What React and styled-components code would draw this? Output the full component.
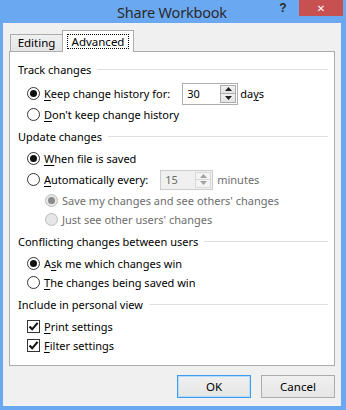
import styled, { createGlobalStyle } from "styled-components";

const GlobalStyle = createGlobalStyle`
  html, body {
    margin: 0;
    padding: 0;
  }
  body {
    font-family: "Noto Sans", "Open Sans", sans-serif;
    font-size: 11px;
    color: #000;
  }
  * {
    box-sizing: border-box;
  }
`;

const Check = () => (
  <svg width="11" height="11" viewBox="0 0 11 11">
    <path d="M1.5 5.5 L4.2 8.3 L9.6 1.8" fill="none" stroke="#111" strokeWidth="2.1" />
  </svg>
);

const Arrow = ({ up, disabled }) => (
  <svg width="7" height="4" viewBox="0 0 7 4">
    <path
      d={up ? "M0 4 L3.5 0 L7 4 Z" : "M0 0 L3.5 4 L7 0 Z"}
      fill={disabled ? "#a0a0a0" : "#222"}
    />
  </svg>
);

// spacing before / after is measured from the text, the row gap is 4px
const SpinBox = ({ value, width, height, before, after, disabled }) => (
  <Spin $w={width} $h={height} $ml={before - 4} $mr={after - 4} $disabled={disabled}>
    <SpinValue $disabled={disabled}>{value}</SpinValue>
    <Spinner>
      <SpinButton $disabled={disabled}>
        <Arrow up disabled={disabled} />
      </SpinButton>
      <SpinButton $disabled={disabled}>
        <Arrow disabled={disabled} />
      </SpinButton>
    </Spinner>
  </Spin>
);

const Radio = ({ checked, disabled, nested, tall, children }) => (
  <Option $tall={tall} $nested={nested}>
    <RadioMark $checked={checked} $disabled={disabled} />
    {children}
  </Option>
);

const CheckOption = ({ children }) => (
  <Option>
    <CheckMark>
      <Check />
    </CheckMark>
    {children}
  </Option>
);

export default function App() {
  return (
    <>
      <GlobalStyle />
      <Window>
        <TitleBar>
          <Title>Share Workbook</Title>
          <Caption>
            <HelpButton>?</HelpButton>
            <CloseButton>✕</CloseButton>
          </Caption>
        </TitleBar>
        <Client>
          <TabStrip>
            <Tab>Editing</Tab>
            <Tab $active>
              <Focus>Advanced</Focus>
            </Tab>
          </TabStrip>
          <Panel>
            <Section>
              <Header>Track changes</Header>
              <Options>
                <Radio checked tall>
                  <Label>
                    <u>K</u>eep change history for:
                  </Label>
                  <SpinBox value="30" width={56} height={22} before={12} after={2} />
                  <Label>
                    da<u>y</u>s
                  </Label>
                </Radio>
                <Radio>
                  <Label>
                    <u>D</u>on't keep change history
                  </Label>
                </Radio>
              </Options>
            </Section>

            <Section>
              <Header>Update changes</Header>
              <Options>
                <Radio checked>
                  <Label>
                    <u>W</u>hen file is saved
                  </Label>
                </Radio>
                <Radio tall>
                  <Label>
                    <u>A</u>utomatically every:
                  </Label>
                  <SpinBox value="15" width={53} height={20} before={12} after={4} disabled />
                  <Label $disabled>minutes</Label>
                </Radio>
                <Radio checked disabled nested>
                  <Label $disabled>Save my changes and see others' changes</Label>
                </Radio>
                <Radio disabled nested>
                  <Label $disabled>Just see other users' changes</Label>
                </Radio>
              </Options>
            </Section>

            <Section>
              <Header>Conflicting changes between users</Header>
              <Options>
                <Radio checked>
                  <Label>
                    A<u>s</u>k me which changes win
                  </Label>
                </Radio>
                <Radio>
                  <Label>
                    <u>T</u>he changes being saved win
                  </Label>
                </Radio>
              </Options>
            </Section>

            <Section>
              <Header>Include in personal view</Header>
              <Options>
                <CheckOption>
                  <Label>
                    <u>P</u>rint settings
                  </Label>
                </CheckOption>
                <CheckOption>
                  <Label>
                    <u>F</u>ilter settings
                  </Label>
                </CheckOption>
              </Options>
            </Section>
          </Panel>
          <Footer>
            <Button $default>OK</Button>
            <Button>Cancel</Button>
          </Footer>
        </Client>
      </Window>
    </>
  );
}

const Window = styled.div`
  width: 346px;
  height: 410px;
  background: #6aa9f2;
  display: flex;
  flex-direction: column;
  padding: 0 5px 4px 3px;
`;

const TitleBar = styled.div`
  position: relative;
  height: 25px;
  display: flex;
  justify-content: center;
  align-items: flex-start;
  padding-top: 2px;
`;

const Title = styled.div`
  font-size: 14.5px;
  color: #2a2a2a;
  letter-spacing: -0.2px;
`;

const Caption = styled.div`
  position: absolute;
  top: 0;
  right: -2px;
  display: flex;
  align-items: flex-start;
`;

const HelpButton = styled.div`
  width: 28px;
  height: 16px;
  display: flex;
  justify-content: center;
  align-items: center;
  font-family: "Liberation Sans", sans-serif;
  font-weight: bold;
  font-size: 12px;
  color: #2a2a2a;
  margin-right: 2px;
`;

const CloseButton = styled.div`
  width: 44px;
  height: 16px;
  background: #c75050;
  color: #fff;
  font-family: "DejaVu Sans", sans-serif;
  font-size: 10px;
  font-weight: bold;
  display: flex;
  justify-content: center;
  align-items: center;
`;

const Client = styled.div`
  flex: 1;
  background: #f0f0f0;
  padding: 8px 6px 8px 6px;
  display: flex;
  flex-direction: column;
`;

const TabStrip = styled.div`
  display: flex;
  align-items: flex-end;
  height: 21px;
  padding-left: 1px;
  margin-bottom: -1px;
  position: relative;
  z-index: 1;
`;

const Tab = styled.div`
  height: ${(p) => (p.$active ? "22px" : "18px")};
  width: ${(p) => (p.$active ? "72px" : "53px")};
  margin-left: ${(p) => (p.$active ? "-1px" : "0")};
  border: 1px solid #acacac;
  border-bottom: ${(p) => (p.$active ? "none" : "1px solid #acacac")};
  background: ${(p) =>
    p.$active ? "#fff" : "linear-gradient(#f0f0f0, #e5e5e5)"};
  display: flex;
  justify-content: center;
  align-items: ${(p) => (p.$active ? "flex-start" : "center")};
  padding-top: ${(p) => (p.$active ? "4px" : "0")};
  padding-bottom: ${(p) => (p.$active ? "0" : "1px")};
  font-size: 11.5px;
`;

const Focus = styled.span`
  outline: 1px dotted #000;
  padding: 0 4px;
  line-height: 12px;
  height: 13px;
  display: inline-flex;
  align-items: center;
`;

const Panel = styled.div`
  height: 315px;
  border: 1px solid #acacac;
  background: #fff;
  padding: 7px 6px 0 8px;
  display: flex;
  flex-direction: column;
  gap: 2px;
`;

const Section = styled.div`
  display: flex;
  flex-direction: column;
`;

const Header = styled.div`
  height: 20px;
  display: flex;
  align-items: center;
  gap: 6px;
  white-space: nowrap;

  &::after {
    content: "";
    flex: 1;
    height: 1px;
    background: #dcdfe3;
  }
`;

const Options = styled.div`
  display: flex;
  flex-direction: column;
  padding: 3px 0 0 9px;
`;

const Option = styled.div`
  height: ${(p) => (p.$tall ? "23px" : "19px")};
  display: flex;
  align-items: center;
  gap: 4px;
  padding-left: ${(p) => (p.$nested ? "18px" : "0")};
  white-space: nowrap;
`;

const RadioMark = styled.span`
  width: 13px;
  height: 13px;
  flex: none;
  border-radius: 50%;
  border: 1px solid ${(p) => (p.$disabled ? "#bcbcbc" : "#333")};
  background: ${(p) => (p.$disabled ? "#e6e6e6" : "#fff")};
  display: flex;
  justify-content: center;
  align-items: center;

  &::after {
    content: "";
    display: ${(p) => (p.$checked ? "block" : "none")};
    width: 7px;
    height: 7px;
    border-radius: 50%;
    background: ${(p) => (p.$disabled ? "#8a8a8a" : "#111")};
  }
`;

const CheckMark = styled.span`
  width: 13px;
  height: 13px;
  flex: none;
  border: 1px solid #333;
  background: #fff;
  display: flex;
  justify-content: center;
  align-items: center;
`;

const Label = styled.span`
  color: ${(p) => (p.$disabled ? "#6d6d6d" : "#000")};

  u {
    text-underline-offset: 2px;
  }
`;

const Spin = styled.div`
  width: ${(p) => p.$w}px;
  height: ${(p) => p.$h}px;
  margin-left: ${(p) => p.$ml}px;
  margin-right: ${(p) => p.$mr}px;
  flex: none;
  border: 1px solid ${(p) => (p.$disabled ? "#cccccc" : "#abadb3")};
  background: ${(p) => (p.$disabled ? "#f0f0f0" : "#fff")};
  display: flex;
  align-items: stretch;
  padding: 1px 1px 1px 0;
`;

const SpinValue = styled.div`
  flex: 1;
  display: flex;
  align-items: center;
  padding-left: 4px;
  color: ${(p) => (p.$disabled ? "#6d6d6d" : "#000")};
`;

const Spinner = styled.div`
  width: 16px;
  display: flex;
  flex-direction: column;
`;

const SpinButton = styled.div`
  flex: 1;
  border: 1px solid ${(p) => (p.$disabled ? "#d9d9d9" : "#acacac")};
  background: ${(p) => (p.$disabled ? "#f4f4f4" : "linear-gradient(#f2f2f2, #e3e3e3)")};
  display: flex;
  justify-content: center;
  align-items: center;

  & + & {
    margin-top: -1px;
  }
`;

const Footer = styled.div`
  display: flex;
  justify-content: flex-end;
  gap: 10px;
  margin-top: 9px;
`;

const Button = styled.div`
  width: 74px;
  height: 23px;
  border: 1px solid ${(p) => (p.$default ? "#3c9cf0" : "#acacac")};
  box-shadow: ${(p) => (p.$default ? "inset 0 0 0 1px #b7dcfb" : "none")};
  background: linear-gradient(#f0f0f0, #e5e5e5);
  display: flex;
  justify-content: center;
  align-items: center;
  font-size: 11.5px;
`;
